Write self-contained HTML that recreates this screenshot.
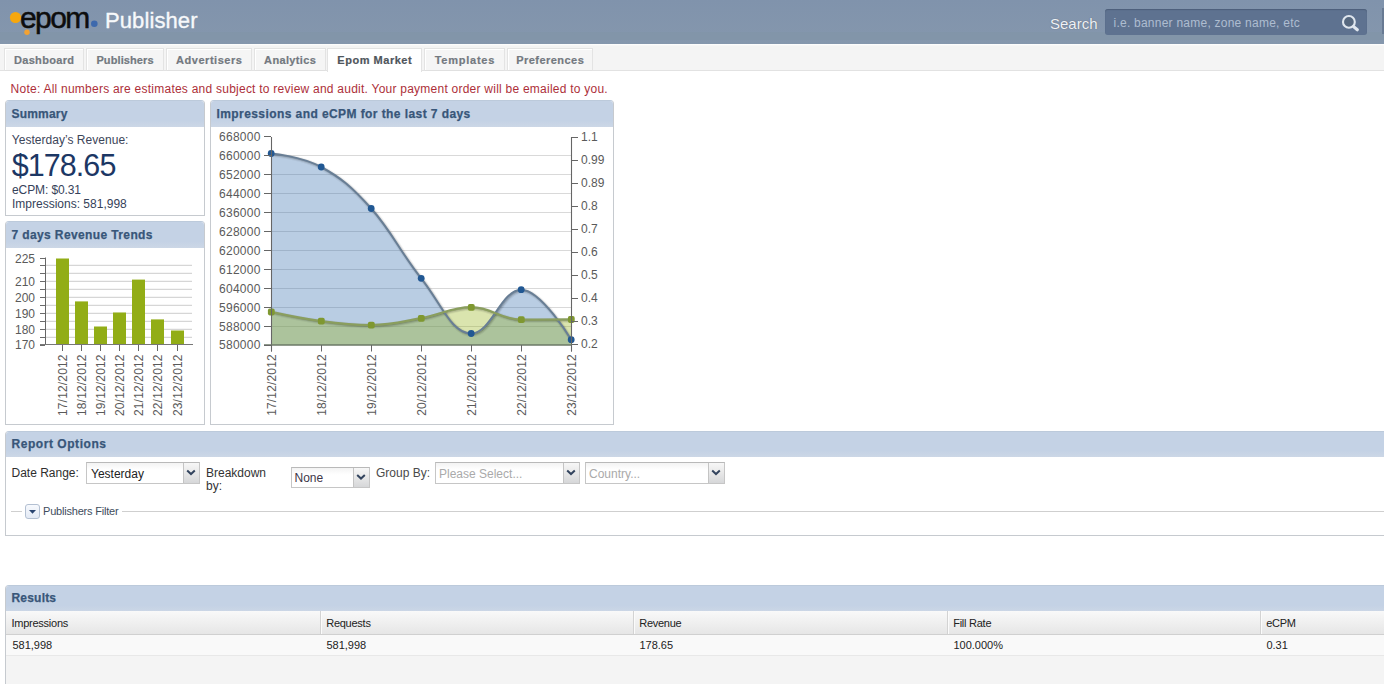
<!DOCTYPE html>
<html><head><meta charset="utf-8"><style>
html,body{margin:0;padding:0;width:1384px;height:684px;overflow:hidden;background:#fff;position:relative;font-family:'Liberation Sans', sans-serif}
.abs{position:absolute}
.t{position:absolute;white-space:nowrap;font-family:'Liberation Sans', sans-serif}
#hdr{position:absolute;left:0;top:0;width:1384px;height:44px;background:linear-gradient(#8093ac,#8597ad)}
#sbox{position:absolute;left:1105px;top:9px;width:262px;height:26px;background:#5e7290;border-radius:3px;box-shadow:inset 0 1px 1px #4d5f7a}
#tabbar{position:absolute;left:0;top:44px;width:1384px;height:26px;background:linear-gradient(#fff,#f4f4f4 2px);border-bottom:1px solid #e2e2e2}
.tab{position:absolute;top:48px;height:21px;border:1px solid #e3e3e3;border-bottom:1px solid #e0e0e0;background:#f5f5f5;box-shadow:inset 1px 1px 0 #fff}
.tab.act{background:#fff;height:23px;border-bottom:none}
.tabt{font-size:11px;line-height:11px;font-weight:bold;color:#737980;text-align:center;-webkit-text-stroke:0.2px currentColor}
.panel{position:absolute;box-sizing:border-box;border:1px solid #c6cacf;border-top-color:#bccadb;border-radius:4px 4px 0 0;background:#fff;overflow:hidden}
.ph{position:absolute;left:0;top:0;right:0;height:26px;background:linear-gradient(#c4d2e5 75%,#ccd7e6)}
.ax{font-family:'Liberation Sans', sans-serif;font-size:12px;fill:#5a5a5a}
.combo{position:absolute;border:1px solid #c6c6c6;border-top-color:#b9b9b9;background:linear-gradient(#f3f3f3,#fff 35%)}
.trig{position:absolute;right:0;top:0;width:15px;height:100%;background:linear-gradient(#f7f7f7,#e9e9e9 45%,#d6d7d9);border-left:1px solid #c4c4c4}
</style></head><body>
<div id="hdr"></div><div class="abs" style="left:0;top:32px;width:1384px;height:8px;background:#8094a6;opacity:0.6"></div><svg class="abs" width="120" height="43" style="left:0;top:0"><circle cx="15.5" cy="17.5" r="5.6" fill="#f7a70d"/><circle cx="27" cy="32.3" r="2.7" fill="#f3a232"/><circle cx="94.3" cy="23.8" r="3.3" fill="#3d69ad"/></svg><div class="t " style="left:20px;top:3.21px;font-size:30px;line-height:30px;color:#0d0d0d;letter-spacing:-1.6px;-webkit-text-stroke:0.5px #0d0d0d;">epom</div>
<div class="t " style="left:105px;top:9.88px;font-size:22px;line-height:22px;color:#f7f9fb;letter-spacing:0.1px;-webkit-text-stroke:0.35px #f7f9fb;">Publisher</div>
<div class="t " style="left:1050px;top:16.20px;font-size:15px;line-height:15px;color:#eef2f6;text-shadow:0 0 1px #556;">Search</div>
<div id="sbox"></div><div class="t " style="left:1113.5px;top:16.64px;font-size:12px;line-height:12px;color:#aebdd0;letter-spacing:0.24px;">i.e. banner name, zone name, etc</div>
<svg class="abs" width="24" height="24" style="left:1338px;top:11px"><circle cx="10.9" cy="10.9" r="5.9" fill="#56687f" stroke="#dfe6ee" stroke-width="2.1"/><line x1="15.6" y1="15.6" x2="19.3" y2="18.8" stroke="#dfe6ee" stroke-width="3.2" stroke-linecap="round"/></svg><div class="abs" style="left:1382px;top:8px;width:2px;height:26px;background:#687a93"></div><div id="tabbar"></div><div class="tab" style="left:4px;width:78px"></div><div class="t tabt" style="left:4px;width:80px;top:55.29px;letter-spacing:0.31px;text-indent:0.31px;">Dashboard</div><div class="tab" style="left:86px;width:76px"></div><div class="t tabt" style="left:86px;width:78px;top:55.29px;letter-spacing:0.11px;text-indent:0.11px;">Publishers</div><div class="tab" style="left:166px;width:84px"></div><div class="t tabt" style="left:166px;width:86px;top:55.29px;letter-spacing:0.53px;text-indent:0.53px;">Advertisers</div><div class="tab" style="left:254px;width:70px"></div><div class="t tabt" style="left:254px;width:72px;top:55.29px;letter-spacing:0.36px;text-indent:0.36px;">Analytics</div><div class="tab act" style="left:327px;width:93px"></div><div class="t tabt" style="left:327px;width:95px;top:55.29px;letter-spacing:0.52px;text-indent:0.52px;color:#4f565c">Epom Market</div><div class="tab" style="left:424px;width:79px"></div><div class="t tabt" style="left:424px;width:81px;top:55.29px;letter-spacing:0.76px;text-indent:0.76px;">Templates</div><div class="tab" style="left:507px;width:84px"></div><div class="t tabt" style="left:507px;width:86px;top:55.29px;letter-spacing:0.46px;text-indent:0.46px;">Preferences</div><div class="t " style="left:10.6px;top:82.84px;font-size:12px;line-height:12px;color:#ad2f39;letter-spacing:0.24px;">Note: All numbers are estimates and subject to review and audit. Your payment order will be emailed to you.</div>
<div class="panel" style="left:5px;top:100px;width:200px;height:116px"><div class="ph"></div></div><div class="t " style="left:11.5px;top:107.64px;font-size:12px;line-height:12px;color:#385679;font-weight:bold;-webkit-text-stroke:0.25px #385679;letter-spacing:0.2px;">Summary</div>
<div class="panel" style="left:5px;top:221px;width:200px;height:204px"><div class="ph"></div></div><div class="t " style="left:11.5px;top:228.64px;font-size:12px;line-height:12px;color:#385679;font-weight:bold;-webkit-text-stroke:0.25px #385679;letter-spacing:0.38px;">7 days Revenue Trends</div>
<div class="panel" style="left:210px;top:100px;width:404px;height:325px"><div class="ph"></div></div><div class="t " style="left:216.5px;top:107.64px;font-size:12px;line-height:12px;color:#385679;font-weight:bold;-webkit-text-stroke:0.25px #385679;letter-spacing:0.42px;">Impressions and eCPM for the last 7 days</div>
<div class="t " style="left:11.8px;top:133.74px;font-size:12px;line-height:12px;color:#3c4559;letter-spacing:0.03px;">Yesterday’s Revenue:</div>
<div class="t " style="left:11.8px;top:150.08px;font-size:30.5px;line-height:30.5px;color:#1c3764;letter-spacing:-0.95px;">$178.65</div>
<div class="t " style="left:12px;top:184.04px;font-size:12px;line-height:12px;color:#36425a;letter-spacing:-0.1px;">eCPM: $0.31</div>
<div class="t " style="left:12px;top:197.54px;font-size:12px;line-height:12px;color:#36425a;">Impressions: 581,998</div>
<svg class="abs" width="1384" height="684" style="left:0;top:0;overflow:visible"><line x1="40" y1="258.5" x2="45" y2="258.5" stroke="#6b6b6b" stroke-width="1"/><line x1="46" y1="265.3" x2="192" y2="265.3" stroke="#d6d6d6" stroke-width="1.2"/><line x1="40" y1="265.5" x2="45" y2="265.5" stroke="#6b6b6b" stroke-width="1"/><line x1="46" y1="273.3" x2="192" y2="273.3" stroke="#d6d6d6" stroke-width="1.2"/><line x1="40" y1="273.5" x2="45" y2="273.5" stroke="#6b6b6b" stroke-width="1"/><line x1="46" y1="281.3" x2="192" y2="281.3" stroke="#d6d6d6" stroke-width="1.2"/><line x1="40" y1="281.5" x2="45" y2="281.5" stroke="#6b6b6b" stroke-width="1"/><line x1="46" y1="289.3" x2="192" y2="289.3" stroke="#d6d6d6" stroke-width="1.2"/><line x1="40" y1="289.5" x2="45" y2="289.5" stroke="#6b6b6b" stroke-width="1"/><line x1="46" y1="297.3" x2="192" y2="297.3" stroke="#d6d6d6" stroke-width="1.2"/><line x1="40" y1="297.5" x2="45" y2="297.5" stroke="#6b6b6b" stroke-width="1"/><line x1="46" y1="305.3" x2="192" y2="305.3" stroke="#d6d6d6" stroke-width="1.2"/><line x1="40" y1="305.5" x2="45" y2="305.5" stroke="#6b6b6b" stroke-width="1"/><line x1="46" y1="313.3" x2="192" y2="313.3" stroke="#d6d6d6" stroke-width="1.2"/><line x1="40" y1="313.5" x2="45" y2="313.5" stroke="#6b6b6b" stroke-width="1"/><line x1="46" y1="321.3" x2="192" y2="321.3" stroke="#d6d6d6" stroke-width="1.2"/><line x1="40" y1="321.5" x2="45" y2="321.5" stroke="#6b6b6b" stroke-width="1"/><line x1="46" y1="329.3" x2="192" y2="329.3" stroke="#d6d6d6" stroke-width="1.2"/><line x1="40" y1="329.5" x2="45" y2="329.5" stroke="#6b6b6b" stroke-width="1"/><line x1="46" y1="337.3" x2="192" y2="337.3" stroke="#d6d6d6" stroke-width="1.2"/><line x1="40" y1="337.5" x2="45" y2="337.5" stroke="#6b6b6b" stroke-width="1"/><line x1="40" y1="345.5" x2="45" y2="345.5" stroke="#6b6b6b" stroke-width="1"/><rect x="56" y="258.5" width="13" height="86.5" fill="#92ad16"/><rect x="75" y="301.4" width="13" height="43.6" fill="#92ad16"/><rect x="94" y="326.5" width="13" height="18.5" fill="#92ad16"/><rect x="113" y="312.5" width="13" height="32.5" fill="#92ad16"/><rect x="132" y="279.6" width="13" height="65.4" fill="#92ad16"/><rect x="151" y="319.4" width="13" height="25.6" fill="#92ad16"/><rect x="171" y="330.5" width="13" height="14.5" fill="#92ad16"/><line x1="45.5" y1="257.5" x2="45.5" y2="345" stroke="#666" stroke-width="1"/><line x1="40" y1="344.5" x2="193" y2="344.5" stroke="#777" stroke-width="1.2"/><line x1="62.5" y1="345" x2="62.5" y2="351" stroke="#666" stroke-width="1"/><line x1="81.5" y1="345" x2="81.5" y2="351" stroke="#666" stroke-width="1"/><line x1="100.5" y1="345" x2="100.5" y2="351" stroke="#666" stroke-width="1"/><line x1="119.5" y1="345" x2="119.5" y2="351" stroke="#666" stroke-width="1"/><line x1="138.5" y1="345" x2="138.5" y2="351" stroke="#666" stroke-width="1"/><line x1="157.5" y1="345" x2="157.5" y2="351" stroke="#666" stroke-width="1"/><line x1="177.5" y1="345" x2="177.5" y2="351" stroke="#666" stroke-width="1"/><text x="35" y="262.6" text-anchor="end" class="ax">225</text><text x="35" y="285.8" text-anchor="end" class="ax">210</text><text x="35" y="301.6" text-anchor="end" class="ax">200</text><text x="35" y="317.6" text-anchor="end" class="ax">190</text><text x="35" y="333.6" text-anchor="end" class="ax">180</text><text x="35" y="349.2" text-anchor="end" class="ax">170</text><text transform="translate(66.8,354.3) rotate(-90)" text-anchor="end" class="ax" letter-spacing="0.17">17/12/2012</text><text transform="translate(85.8,354.3) rotate(-90)" text-anchor="end" class="ax" letter-spacing="0.17">18/12/2012</text><text transform="translate(104.8,354.3) rotate(-90)" text-anchor="end" class="ax" letter-spacing="0.17">19/12/2012</text><text transform="translate(123.8,354.3) rotate(-90)" text-anchor="end" class="ax" letter-spacing="0.17">20/12/2012</text><text transform="translate(142.8,354.3) rotate(-90)" text-anchor="end" class="ax" letter-spacing="0.17">21/12/2012</text><text transform="translate(161.8,354.3) rotate(-90)" text-anchor="end" class="ax" letter-spacing="0.17">22/12/2012</text><text transform="translate(181.8,354.3) rotate(-90)" text-anchor="end" class="ax" letter-spacing="0.17">23/12/2012</text><line x1="271" y1="155.5" x2="571" y2="155.5" stroke="#d9d9d9" stroke-width="1"/><line x1="271" y1="174.5" x2="571" y2="174.5" stroke="#d9d9d9" stroke-width="1"/><line x1="271" y1="193.5" x2="571" y2="193.5" stroke="#d9d9d9" stroke-width="1"/><line x1="271" y1="212.5" x2="571" y2="212.5" stroke="#d9d9d9" stroke-width="1"/><line x1="271" y1="231.5" x2="571" y2="231.5" stroke="#d9d9d9" stroke-width="1"/><line x1="271" y1="250.5" x2="571" y2="250.5" stroke="#d9d9d9" stroke-width="1"/><line x1="271" y1="269.5" x2="571" y2="269.5" stroke="#d9d9d9" stroke-width="1"/><line x1="271" y1="288.5" x2="571" y2="288.5" stroke="#d9d9d9" stroke-width="1"/><line x1="271" y1="307.5" x2="571" y2="307.5" stroke="#d9d9d9" stroke-width="1"/><line x1="271" y1="326.5" x2="571" y2="326.5" stroke="#d9d9d9" stroke-width="1"/><path d="M 271.20 153.50 C 271.20 153.50 301.20 156.00 321.20 167.00 C 341.20 178.00 351.20 186.24 371.20 208.50 C 391.20 230.76 401.20 253.30 421.20 278.30 C 441.20 303.30 451.20 333.50 471.20 333.50 C 491.20 333.50 501.20 289.70 521.20 289.70 C 541.20 289.70 571.20 339.70 571.20 339.70 L 571.20 345 L 271.20 345 Z" fill="rgb(55,112,175)" fill-opacity="0.35"/><path d="M 271.20 311.90 C 271.20 311.90 301.20 318.48 321.20 321.10 C 341.20 323.72 351.20 325.00 371.20 325.00 C 391.20 325.00 401.20 321.76 421.20 318.20 C 441.20 314.64 451.20 307.20 471.20 307.20 C 491.20 307.20 501.20 319.60 521.20 319.60 C 541.20 319.60 571.20 319.40 571.20 319.40 L 571.20 345 L 271.20 345 Z" fill="rgb(148,179,24)" fill-opacity="0.35"/><g transform="translate(1,1)"><path d="M 271.20 153.50 C 271.20 153.50 301.20 156.00 321.20 167.00 C 341.20 178.00 351.20 186.24 371.20 208.50 C 391.20 230.76 401.20 253.30 421.20 278.30 C 441.20 303.30 451.20 333.50 471.20 333.50 C 491.20 333.50 501.20 289.70 521.20 289.70 C 541.20 289.70 571.20 339.70 571.20 339.70" fill="none" stroke="#000" stroke-opacity="0.05" stroke-width="5"/><path d="M 271.20 153.50 C 271.20 153.50 301.20 156.00 321.20 167.00 C 341.20 178.00 351.20 186.24 371.20 208.50 C 391.20 230.76 401.20 253.30 421.20 278.30 C 441.20 303.30 451.20 333.50 471.20 333.50 C 491.20 333.50 501.20 289.70 521.20 289.70 C 541.20 289.70 571.20 339.70 571.20 339.70" fill="none" stroke="#000" stroke-opacity="0.10" stroke-width="3"/><path d="M 271.20 153.50 C 271.20 153.50 301.20 156.00 321.20 167.00 C 341.20 178.00 351.20 186.24 371.20 208.50 C 391.20 230.76 401.20 253.30 421.20 278.30 C 441.20 303.30 451.20 333.50 471.20 333.50 C 491.20 333.50 501.20 289.70 521.20 289.70 C 541.20 289.70 571.20 339.70 571.20 339.70" fill="none" stroke="#000" stroke-opacity="0.15" stroke-width="1"/></g><g transform="translate(1,1)"><path d="M 271.20 311.90 C 271.20 311.90 301.20 318.48 321.20 321.10 C 341.20 323.72 351.20 325.00 371.20 325.00 C 391.20 325.00 401.20 321.76 421.20 318.20 C 441.20 314.64 451.20 307.20 471.20 307.20 C 491.20 307.20 501.20 319.60 521.20 319.60 C 541.20 319.60 571.20 319.40 571.20 319.40" fill="none" stroke="#000" stroke-opacity="0.05" stroke-width="5"/><path d="M 271.20 311.90 C 271.20 311.90 301.20 318.48 321.20 321.10 C 341.20 323.72 351.20 325.00 371.20 325.00 C 391.20 325.00 401.20 321.76 421.20 318.20 C 441.20 314.64 451.20 307.20 471.20 307.20 C 491.20 307.20 501.20 319.60 521.20 319.60 C 541.20 319.60 571.20 319.40 571.20 319.40" fill="none" stroke="#000" stroke-opacity="0.10" stroke-width="3"/><path d="M 271.20 311.90 C 271.20 311.90 301.20 318.48 321.20 321.10 C 341.20 323.72 351.20 325.00 371.20 325.00 C 391.20 325.00 401.20 321.76 421.20 318.20 C 441.20 314.64 451.20 307.20 471.20 307.20 C 491.20 307.20 501.20 319.60 521.20 319.60 C 541.20 319.60 571.20 319.40 571.20 319.40" fill="none" stroke="#000" stroke-opacity="0.15" stroke-width="1"/></g><path d="M 271.20 153.50 C 271.20 153.50 301.20 156.00 321.20 167.00 C 341.20 178.00 351.20 186.24 371.20 208.50 C 391.20 230.76 401.20 253.30 421.20 278.30 C 441.20 303.30 451.20 333.50 471.20 333.50 C 491.20 333.50 501.20 289.70 521.20 289.70 C 541.20 289.70 571.20 339.70 571.20 339.70" fill="none" stroke="#687e95" stroke-width="2"/><path d="M 271.20 311.90 C 271.20 311.90 301.20 318.48 321.20 321.10 C 341.20 323.72 351.20 325.00 371.20 325.00 C 391.20 325.00 401.20 321.76 421.20 318.20 C 441.20 314.64 451.20 307.20 471.20 307.20 C 491.20 307.20 501.20 319.60 521.20 319.60 C 541.20 319.60 571.20 319.40 571.20 319.40" fill="none" stroke="#8a9e5e" stroke-width="2.2"/><circle cx="271.20" cy="153.5" r="3.4" fill="#215893"/><circle cx="321.20" cy="167" r="3.4" fill="#215893"/><circle cx="371.20" cy="208.5" r="3.4" fill="#215893"/><circle cx="421.20" cy="278.3" r="3.4" fill="#215893"/><circle cx="471.20" cy="333.5" r="3.4" fill="#215893"/><circle cx="521.20" cy="289.7" r="3.4" fill="#215893"/><circle cx="571.20" cy="339.7" r="3.4" fill="#215893"/><rect x="267.90" y="308.60" width="6.8" height="6.8" rx="1.8" fill="#7f9830"/><rect x="317.90" y="317.80" width="6.8" height="6.8" rx="1.8" fill="#7f9830"/><rect x="367.90" y="321.70" width="6.8" height="6.8" rx="1.8" fill="#7f9830"/><rect x="417.90" y="314.90" width="6.8" height="6.8" rx="1.8" fill="#7f9830"/><rect x="467.90" y="303.90" width="6.8" height="6.8" rx="1.8" fill="#7f9830"/><rect x="517.90" y="316.30" width="6.8" height="6.8" rx="1.8" fill="#7f9830"/><rect x="567.90" y="316.10" width="6.8" height="6.8" rx="1.8" fill="#7f9830"/><line x1="271.5" y1="137" x2="271.5" y2="351.5" stroke="#666" stroke-width="1.1"/><line x1="571.5" y1="137" x2="571.5" y2="351.5" stroke="#666" stroke-width="1.1"/><line x1="264" y1="344.9" x2="572" y2="344.9" stroke="#6b7866" stroke-width="1.5"/><line x1="264" y1="136.5" x2="271" y2="136.5" stroke="#666" stroke-width="1"/><text x="260.8" y="141.0" text-anchor="end" class="ax" letter-spacing="0.3">668000</text><line x1="264" y1="155.5" x2="271" y2="155.5" stroke="#666" stroke-width="1"/><text x="260.8" y="159.9" text-anchor="end" class="ax" letter-spacing="0.3">660000</text><line x1="264" y1="174.5" x2="271" y2="174.5" stroke="#666" stroke-width="1"/><text x="260.8" y="178.9" text-anchor="end" class="ax" letter-spacing="0.3">652000</text><line x1="264" y1="193.5" x2="271" y2="193.5" stroke="#666" stroke-width="1"/><text x="260.8" y="197.8" text-anchor="end" class="ax" letter-spacing="0.3">644000</text><line x1="264" y1="212.5" x2="271" y2="212.5" stroke="#666" stroke-width="1"/><text x="260.8" y="216.8" text-anchor="end" class="ax" letter-spacing="0.3">636000</text><line x1="264" y1="231.5" x2="271" y2="231.5" stroke="#666" stroke-width="1"/><text x="260.8" y="235.8" text-anchor="end" class="ax" letter-spacing="0.3">628000</text><line x1="264" y1="250.5" x2="271" y2="250.5" stroke="#666" stroke-width="1"/><text x="260.8" y="254.7" text-anchor="end" class="ax" letter-spacing="0.3">620000</text><line x1="264" y1="269.5" x2="271" y2="269.5" stroke="#666" stroke-width="1"/><text x="260.8" y="273.7" text-anchor="end" class="ax" letter-spacing="0.3">612000</text><line x1="264" y1="288.5" x2="271" y2="288.5" stroke="#666" stroke-width="1"/><text x="260.8" y="292.6" text-anchor="end" class="ax" letter-spacing="0.3">604000</text><line x1="264" y1="307.5" x2="271" y2="307.5" stroke="#666" stroke-width="1"/><text x="260.8" y="311.6" text-anchor="end" class="ax" letter-spacing="0.3">596000</text><line x1="264" y1="326.5" x2="271" y2="326.5" stroke="#666" stroke-width="1"/><text x="260.8" y="330.5" text-anchor="end" class="ax" letter-spacing="0.3">588000</text><line x1="264" y1="345.5" x2="271" y2="345.5" stroke="#666" stroke-width="1"/><text x="260.8" y="349.4" text-anchor="end" class="ax" letter-spacing="0.3">580000</text><line x1="572" y1="137.5" x2="578" y2="137.5" stroke="#666" stroke-width="1"/><text x="581" y="141.3" class="ax">1.1</text><line x1="572" y1="160.5" x2="578" y2="160.5" stroke="#666" stroke-width="1"/><text x="581" y="164.2" class="ax">0.99</text><line x1="572" y1="183.5" x2="578" y2="183.5" stroke="#666" stroke-width="1"/><text x="581" y="187.2" class="ax">0.89</text><line x1="572" y1="206.5" x2="578" y2="206.5" stroke="#666" stroke-width="1"/><text x="581" y="210.2" class="ax">0.8</text><line x1="572" y1="229.5" x2="578" y2="229.5" stroke="#666" stroke-width="1"/><text x="581" y="233.1" class="ax">0.7</text><line x1="572" y1="252.5" x2="578" y2="252.5" stroke="#666" stroke-width="1"/><text x="581" y="256.1" class="ax">0.6</text><line x1="572" y1="275.5" x2="578" y2="275.5" stroke="#666" stroke-width="1"/><text x="581" y="279.0" class="ax">0.5</text><line x1="572" y1="298.5" x2="578" y2="298.5" stroke="#666" stroke-width="1"/><text x="581" y="301.9" class="ax">0.4</text><line x1="572" y1="321.5" x2="578" y2="321.5" stroke="#666" stroke-width="1"/><text x="581" y="324.9" class="ax">0.3</text><line x1="572" y1="344.5" x2="578" y2="344.5" stroke="#666" stroke-width="1"/><text x="581" y="347.8" class="ax">0.2</text><line x1="271.5" y1="345" x2="271.5" y2="351.5" stroke="#666" stroke-width="1"/><text transform="translate(275.7,354.1) rotate(-90)" text-anchor="end" class="ax" letter-spacing="0.17">17/12/2012</text><line x1="321.5" y1="345" x2="321.5" y2="351.5" stroke="#666" stroke-width="1"/><text transform="translate(325.7,354.1) rotate(-90)" text-anchor="end" class="ax" letter-spacing="0.17">18/12/2012</text><line x1="371.5" y1="345" x2="371.5" y2="351.5" stroke="#666" stroke-width="1"/><text transform="translate(375.7,354.1) rotate(-90)" text-anchor="end" class="ax" letter-spacing="0.17">19/12/2012</text><line x1="421.5" y1="345" x2="421.5" y2="351.5" stroke="#666" stroke-width="1"/><text transform="translate(425.7,354.1) rotate(-90)" text-anchor="end" class="ax" letter-spacing="0.17">20/12/2012</text><line x1="471.5" y1="345" x2="471.5" y2="351.5" stroke="#666" stroke-width="1"/><text transform="translate(475.7,354.1) rotate(-90)" text-anchor="end" class="ax" letter-spacing="0.17">21/12/2012</text><line x1="521.5" y1="345" x2="521.5" y2="351.5" stroke="#666" stroke-width="1"/><text transform="translate(525.7,354.1) rotate(-90)" text-anchor="end" class="ax" letter-spacing="0.17">22/12/2012</text><line x1="571.5" y1="345" x2="571.5" y2="351.5" stroke="#666" stroke-width="1"/><text transform="translate(575.7,354.1) rotate(-90)" text-anchor="end" class="ax" letter-spacing="0.17">23/12/2012</text></svg><div class="panel" style="left:5px;top:431px;width:1400px;height:105px"><div class="ph" style="height:25px"></div></div><div class="t " style="left:11.5px;top:437.84px;font-size:12px;line-height:12px;color:#385679;font-weight:bold;-webkit-text-stroke:0.25px #385679;letter-spacing:0.55px;">Report Options</div>
<div class="t " style="left:11.5px;top:467.24px;font-size:12px;line-height:12px;color:#2e2e2e;">Date Range:</div>
<div class="combo" style="left:86px;top:462px;width:112px;height:20px"><div class="trig"><svg width="17" height="20"><path d="M3.2 7.6 L7 11.1 L10.8 7.6" fill="none" stroke="#33445e" stroke-width="2"/></svg></div></div><div class="t " style="left:91px;top:467.64px;font-size:12px;line-height:12px;color:#222;">Yesterday</div>
<div class="t " style="left:206px;top:466.54px;font-size:12px;line-height:12px;color:#333;">Breakdown</div>
<div class="t " style="left:206px;top:479.54px;font-size:12px;line-height:12px;color:#333;">by:</div>
<div class="combo" style="left:291px;top:467px;width:77px;height:19px"><div class="trig"><svg width="17" height="19"><path d="M3.2 7.1 L7 10.6 L10.8 7.1" fill="none" stroke="#33445e" stroke-width="2"/></svg></div></div><div class="t " style="left:294.5px;top:472.14px;font-size:12px;line-height:12px;color:#3e3648;">None</div>
<div class="t " style="left:376px;top:467.24px;font-size:12px;line-height:12px;color:#4a4a4a;">Group By:</div>
<div class="combo" style="left:435px;top:462px;width:143px;height:20px"><div class="trig"><svg width="17" height="20"><path d="M3.2 7.6 L7 11.1 L10.8 7.6" fill="none" stroke="#33445e" stroke-width="2"/></svg></div></div><div class="t " style="left:439px;top:467.64px;font-size:12px;line-height:12px;color:#aaa;">Please Select...</div>
<div class="combo" style="left:585px;top:462px;width:138px;height:20px"><div class="trig"><svg width="17" height="20"><path d="M3.2 7.6 L7 11.1 L10.8 7.6" fill="none" stroke="#33445e" stroke-width="2"/></svg></div></div><div class="t " style="left:589px;top:467.64px;font-size:12px;line-height:12px;color:#aaa;">Country...</div>
<div class="abs" style="left:11px;top:511px;width:11px;height:1px;background:#cfcfcf"></div><div class="abs" style="left:122px;top:511px;width:1300px;height:1px;background:#cfcfcf"></div><div class="abs" style="left:25px;top:504px;width:13px;height:13px;border:1px solid #b3c0d2;border-radius:3px;background:linear-gradient(#f7f9fd,#e3eaf5)"><svg width="13" height="13" style="position:absolute;left:0;top:0"><path d="M3 5 L10 5 L6.5 8.8 Z" fill="#2a4570"/></svg></div><div class="t " style="left:43px;top:505.69px;font-size:11px;line-height:11px;color:#3e4c5c;letter-spacing:-0.2px;">Publishers Filter</div>
<div class="panel" style="left:5px;top:585px;width:1400px;height:120px;background:#f4f4f4"><div class="ph"></div></div><div class="t " style="left:11.5px;top:592.24px;font-size:12px;line-height:12px;color:#385679;font-weight:bold;-webkit-text-stroke:0.25px #385679;letter-spacing:0.2px;">Results</div>
<div class="abs" style="left:6px;top:611px;width:1400px;height:23px;background:linear-gradient(#f9f9f9,#e6e6e6);border-bottom:1px solid #d0d0d0"></div><div class="abs" style="left:6px;top:635px;width:1400px;height:20px;background:#f9f9f9;border-bottom:1px solid #e8e8e8"></div><div class="t " style="left:11.5px;top:618.09px;font-size:11px;line-height:11px;color:#222;letter-spacing:-0.25px;">Impressions</div>
<div class="t " style="left:12.4px;top:639.69px;font-size:11px;line-height:11px;color:#222;">581,998</div>
<div class="abs" style="left:320px;top:611px;width:1px;height:23px;background:#d3d3d3;box-shadow:1px 0 0 #fbfbfb"></div><div class="t " style="left:326.2px;top:618.09px;font-size:11px;line-height:11px;color:#222;letter-spacing:-0.25px;">Requests</div>
<div class="t " style="left:326.4px;top:639.69px;font-size:11px;line-height:11px;color:#222;">581,998</div>
<div class="abs" style="left:633px;top:611px;width:1px;height:23px;background:#d3d3d3;box-shadow:1px 0 0 #fbfbfb"></div><div class="t " style="left:639.2px;top:618.09px;font-size:11px;line-height:11px;color:#222;letter-spacing:-0.25px;">Revenue</div>
<div class="t " style="left:639.4px;top:639.69px;font-size:11px;line-height:11px;color:#222;">178.65</div>
<div class="abs" style="left:947px;top:611px;width:1px;height:23px;background:#d3d3d3;box-shadow:1px 0 0 #fbfbfb"></div><div class="t " style="left:953.2px;top:618.09px;font-size:11px;line-height:11px;color:#222;letter-spacing:-0.25px;">Fill Rate</div>
<div class="t " style="left:953.4px;top:639.69px;font-size:11px;line-height:11px;color:#222;">100.000%</div>
<div class="abs" style="left:1260px;top:611px;width:1px;height:23px;background:#d3d3d3;box-shadow:1px 0 0 #fbfbfb"></div><div class="t " style="left:1266.2px;top:618.09px;font-size:11px;line-height:11px;color:#222;letter-spacing:-0.25px;">eCPM</div>
<div class="t " style="left:1266.4px;top:639.69px;font-size:11px;line-height:11px;color:#222;">0.31</div>

</body></html>
